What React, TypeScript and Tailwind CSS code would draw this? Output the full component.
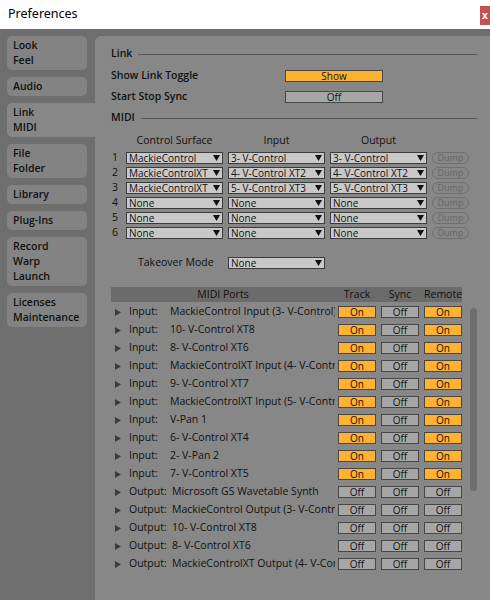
import React from "react";

const FONT = { fontFamily: '"Open Sans", "Noto Sans", sans-serif' };

const tabs = [
  { lines: ["Look", "Feel"] },
  { lines: ["Audio"] },
  { lines: ["Link", "MIDI"], active: true },
  { lines: ["File", "Folder"] },
  { lines: ["Library"] },
  { lines: ["Plug-Ins"] },
  { lines: ["Record", "Warp", "Launch"] },
  { lines: ["Licenses", "Maintenance"] },
];

const surfaces = [
  ["MackieControl", "3- V-Control", "3- V-Control"],
  ["MackieControlXT", "4- V-Control XT2", "4- V-Control XT2"],
  ["MackieControlXT", "5- V-Control XT3", "5- V-Control XT3"],
  ["None", "None", "None"],
  ["None", "None", "None"],
  ["None", "None", "None"],
];

const ports: [string, string, boolean, boolean, boolean][] = [
  ["Input:", "MackieControl Input (3- V-Control)", true, false, true],
  ["Input:", "10- V-Control XT8", true, false, true],
  ["Input:", "8- V-Control XT6", true, false, true],
  ["Input:", "MackieControlXT Input (4- V-Control XT2)", true, false, true],
  ["Input:", "9- V-Control XT7", true, false, true],
  ["Input:", "MackieControlXT Input (5- V-Control XT3)", true, false, true],
  ["Input:", "V-Pan 1", true, false, true],
  ["Input:", "6- V-Control XT4", true, false, true],
  ["Input:", "2- V-Pan 2", true, false, true],
  ["Input:", "7- V-Control XT5", true, false, true],
  ["Output:", "Microsoft GS Wavetable Synth", false, false, false],
  ["Output:", "MackieControl Output (3- V-Control)", false, false, false],
  ["Output:", "10- V-Control XT8", false, false, false],
  ["Output:", "8- V-Control XT6", false, false, false],
  ["Output:", "MackieControlXT Output (4- V-Control XT2)", false, false, false],
];

function Dropdown({ value }: { value: string }) {
  return (
    <div className="flex items-center w-[97px] h-[12px] bg-[#c8c8c8] border border-[#3c3c3c] pl-[2px] pr-[2px] text-[10px] leading-none text-[#111] whitespace-nowrap">
      <span className="flex-1 min-w-0 overflow-hidden">{value}</span>
      <svg width="7" height="6" viewBox="0 0 7 6" className="shrink-0 ml-[1px]">
        <polygon points="0,0 7,0 3.5,6" fill="#111" />
      </svg>
    </div>
  );
}

function Toggle({ on, label, w }: { on: boolean; label: string; w: string }) {
  return (
    <div
      className={
        (on ? "bg-[#ffb22f] " : "bg-[#a6a6a6] ") +
        w +
        " h-[12px] border border-[#474747] flex items-center justify-center text-[10px] leading-none text-[#111]"
      }
    >
      {label}
    </div>
  );
}

function SectionHeader({ title }: { title: string }) {
  return (
    <div className="flex items-center h-[14px] gap-[6px]">
      <span className="font-semibold text-[10.5px] text-[#111]">{title}</span>
      <div className="flex-1 h-px bg-[#565656]" />
    </div>
  );
}

export default function App() {
  return (
    <div className="w-[490px] h-[600px] overflow-hidden flex flex-col bg-[#6e6e6e]" style={FONT}>
      {/* title bar */}
      <div className="h-[29px] bg-white flex items-center justify-between shrink-0">
        <span className="pl-[8px] text-[12.5px] text-black" style={{ fontFamily: '"Noto Sans", sans-serif' }}>
          Preferences
        </span>
        <div className="w-[10px] h-[19px] bg-[#c75050] flex items-center pl-[2px] text-white text-[10px] font-bold mt-[1px]">
          x
        </div>
      </div>

      <div className="flex flex-1 pt-[7px]">
        {/* sidebar */}
        <div className="w-[95px] shrink-0 flex flex-col gap-[7px] pl-[7px]">
          {tabs.map((t, i) => (
            <div
              key={i}
              className={
                (t.active ? "w-[88px] rounded-l-[5px] bg-[#878787]" : "w-[80px] rounded-[5px] bg-[#838383]") +
                " py-[2px] pl-[6px] flex flex-col"
              }
            >
              {t.lines.map((l) => (
                <span key={l} className="h-[15px] leading-[15px] text-[10.5px] font-semibold text-[#111]">
                  {l}
                </span>
              ))}
            </div>
          ))}
        </div>

        {/* main panel */}
        <div className="flex-1 bg-[#878787] rounded-tl-[6px] pl-[16px] pr-[13px] pt-[11px] flex flex-col">
          <SectionHeader title="Link" />
          <div className="flex items-center h-[13px] mt-[8px]">
            <span className="w-[174px] text-[10.5px] font-semibold text-[#111]">Show Link Toggle</span>
            <Toggle on label="Show" w="w-[98px]" />
          </div>
          <div className="flex items-center h-[13px] mt-[8px]">
            <span className="w-[174px] text-[10.5px] font-semibold text-[#111]">Start Stop Sync</span>
            <Toggle on={false} label="Off" w="w-[98px]" />
          </div>
          <div className="mt-[8px]">
            <SectionHeader title="MIDI" />
          </div>

          {/* control surfaces */}
          <div className="flex items-center h-[14px] mt-[9px] text-[10.5px] text-[#111]">
            <div className="w-[15px]" />
            <div className="w-[97px] text-center">Control Surface</div>
            <div className="w-[97px] ml-[5px] text-center">Input</div>
            <div className="w-[97px] ml-[5px] text-center">Output</div>
          </div>
          <div className="flex flex-col mt-[2px]">
            {surfaces.map((s, i) => (
              <div key={i} className="flex items-center h-[15px]">
                <span className="w-[15px] pl-[1px] text-[10.5px] text-[#111]">{i + 1}</span>
                <Dropdown value={s[0]} />
                <div className="ml-[5px]">
                  <Dropdown value={s[1]} />
                </div>
                <div className="ml-[5px]">
                  <Dropdown value={s[2]} />
                </div>
                <div className="ml-[5px] w-[37px] h-[12px] rounded-full border border-[#6f6f6f] flex items-center justify-center text-[9px] leading-none text-[#666]">
                  Dump
                </div>
              </div>
            ))}
          </div>

          <div className="flex items-center h-[14px] mt-[16px]">
            <span className="w-[117px] pl-[27px] text-[10.5px] text-[#111]">Takeover Mode</span>
            <Dropdown value="None" />
          </div>

          {/* MIDI ports */}
          <div className="flex mt-[17px]">
            <div className="w-[351px] flex flex-col">
              <div className="flex items-center h-[15px] bg-[#6b6b6b] text-[10.5px] text-[#111]">
                <div className="w-[224px] text-center">MIDI Ports</div>
                <div className="w-[38px] ml-[3px] text-center">Track</div>
                <div className="w-[38px] ml-[5px] text-center">Sync</div>
                <div className="w-[38px] ml-[5px] text-center">Remote</div>
              </div>
              <div className="flex flex-col mt-[1px]">
                {ports.map((p, i) => (
                  <div key={i} className="flex items-center h-[18px] text-[10.5px] text-[#111] whitespace-nowrap">
                    <div className="w-[18px] shrink-0 pl-[4px] flex items-center">
                      <svg width="6" height="7" viewBox="0 0 6 7">
                        <polygon points="0,0 6,3.5 0,7" fill="#3c3c3c" />
                      </svg>
                    </div>
                    <span className={(p[0] === "Input:" ? "w-[41px]" : "w-[43px]") + " shrink-0"}>{p[0]}</span>
                    <span className="flex-1 min-w-0 overflow-hidden">{p[1]}</span>
                    <div className="ml-[3px] shrink-0">
                      <Toggle on={p[2]} label={p[2] ? "On" : "Off"} w="w-[38px]" />
                    </div>
                    <div className="ml-[5px] shrink-0">
                      <Toggle on={p[3]} label={p[3] ? "On" : "Off"} w="w-[38px]" />
                    </div>
                    <div className="ml-[5px] shrink-0">
                      <Toggle on={p[4]} label={p[4] ? "On" : "Off"} w="w-[38px]" />
                    </div>
                  </div>
                ))}
              </div>
            </div>
            <div className="ml-[8px] w-[7px] pt-[21px]">
              <div className="w-[7px] h-[183px] rounded-full bg-[#6e6e6e]" />
            </div>
          </div>
        </div>
      </div>
    </div>
  );
}
